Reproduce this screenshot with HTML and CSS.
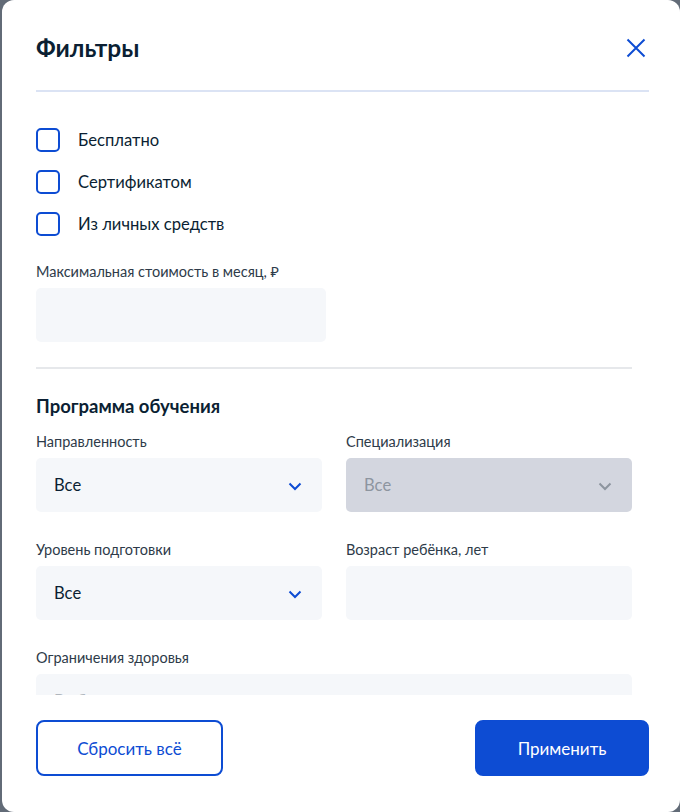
FILE: index.html
```html
<!DOCTYPE html>
<html lang="ru">
<head>
<meta charset="utf-8">
<title>Фильтры</title>
<link rel="stylesheet" href="styles.css">
</head>
<body>
<div class="modal">
  <header class="modal-header">
    <div class="header-row">
      <h1 class="title">Фильтры</h1>
      <button class="close" aria-label="Закрыть">
        <svg width="24" height="24" viewBox="0 0 24 24"><path d="M3.5 3.5L20.5 20.5M20.5 3.5L3.5 20.5" stroke="#0d4cd3" stroke-width="2" fill="none"/></svg>
      </button>
    </div>
    <div class="header-divider"></div>
  </header>

  <div class="modal-body">
    <div class="checks">
      <label class="check"><span class="box"></span><span>Бесплатно</span></label>
      <label class="check"><span class="box"></span><span>Сертификатом</span></label>
      <label class="check"><span class="box"></span><span>Из личных средств</span></label>
    </div>

    <div class="field field-price">
      <div class="label">Максимальная стоимость в месяц, ₽</div>
      <div class="input input-price"></div>
    </div>

    <div class="divider"></div>

    <h2 class="section-title">Программа обучения</h2>

    <div class="grid">
      <div class="field">
        <div class="label">Направленность</div>
        <div class="input select"><span>Все</span>
          <svg class="chev" width="14" height="9" viewBox="0 0 14 9"><path d="M1.5 1.5L7 7L12.5 1.5" stroke="#0d4cd3" stroke-width="2" fill="none"/></svg>
        </div>
      </div>
      <div class="field">
        <div class="label">Специализация</div>
        <div class="input select disabled"><span>Все</span>
          <svg class="chev" width="14" height="9" viewBox="0 0 14 9"><path d="M1.5 1.5L7 7L12.5 1.5" stroke="#8d959f" stroke-width="2" fill="none"/></svg>
        </div>
      </div>
      <div class="field">
        <div class="label">Уровень подготовки</div>
        <div class="input select"><span>Все</span>
          <svg class="chev" width="14" height="9" viewBox="0 0 14 9"><path d="M1.5 1.5L7 7L12.5 1.5" stroke="#0d4cd3" stroke-width="2" fill="none"/></svg>
        </div>
      </div>
      <div class="field">
        <div class="label">Возраст ребёнка, лет</div>
        <div class="input"></div>
      </div>
      <div class="field span2">
        <div class="label">Ограничения здоровья</div>
        <div class="input select"><span class="placeholder">Выберите ограничения</span></div>
      </div>
    </div>
  </div>

  <footer class="modal-footer">
    <button class="btn btn-outline">Сбросить всё</button>
    <button class="btn btn-primary">Применить</button>
  </footer>
</div>
</body>
</html>
```

FILE: styles.css
```css
* { box-sizing: border-box; }

html, body {
  margin: 0;
  height: 100%;
}

body {
  background: #626b77;
  font-family: Lato, "Noto Sans", "Liberation Sans", sans-serif;
  color: #0b1f33;
  overflow: hidden;
}

.modal {
  margin-left: 2px;
  width: 678px;
  height: 812px;
  background: #fff;
  border-radius: 12px;
  display: flex;
  flex-direction: column;
  overflow: hidden;
}

.modal-header {
  padding: 32px 31px 0 34px;
  flex: none;
}

.header-row {
  display: flex;
  align-items: center;
  justify-content: space-between;
  height: 32px;
}

.title {
  margin: 0;
  font-size: 24.5px;
  line-height: 32px;
  font-weight: 700;
  color: #0b1f33;
}

.close {
  border: 0;
  background: none;
  padding: 0;
  width: 24px;
  height: 24px;
  margin-right: 1px;
  cursor: pointer;
  display: block;
}

.close svg { display: block; }

.header-divider {
  margin-top: 26px;
  height: 2px;
  background: #dbe3f4;
}

.modal-body {
  flex: 1;
  overflow: hidden;
  padding: 36px 48px 0 34px;
}

.checks {
  display: flex;
  flex-direction: column;
  gap: 18px;
}

.check {
  display: flex;
  align-items: center;
  gap: 18px;
  font-size: 16.6px;
  line-height: 24px;
  color: #0b1f33;
}

.box {
  width: 24px;
  height: 24px;
  border: 2px solid #0d4cd3;
  border-radius: 5px;
  flex: none;
}

.field-price {
  margin-top: 26px;
}

.label {
  font-size: 14.5px;
  line-height: 20px;
  color: #2e3b49;
  margin-bottom: 6px;
}

.input {
  height: 54px;
  background: #f5f7fa;
  border-radius: 5px;
}

.input-price {
  width: 290px;
}

.divider {
  margin-top: 25px;
  height: 2px;
  background: #e6e8eb;
}

.section-title {
  margin: 25px 0 14px;
  font-size: 18.5px;
  line-height: 24px;
  font-weight: 700;
  color: #0b1f33;
}

.grid {
  display: grid;
  grid-template-columns: 286px 286px;
  column-gap: 24px;
  row-gap: 28px;
}

.span2 { grid-column: 1 / span 2; }

.select {
  display: flex;
  align-items: center;
  justify-content: space-between;
  padding: 0 20px 0 18px;
  font-size: 16.6px;
  color: #0b1f33;
}

.chev { display: block; margin-top: 2px; }

.select.disabled {
  background: #d3d6df;
  color: #8d959f;
}

.placeholder { color: #b0b6bd; }

.modal-footer {
  flex: none;
  display: flex;
  justify-content: space-between;
  align-items: center;
  padding: 25px 31px 36px 34px;
}

.btn {
  height: 56px;
  border-radius: 8px;
  font-family: Lato, "Noto Sans", "Liberation Sans", sans-serif;
  font-size: 17px;
  padding: 0 30px;
  cursor: pointer;
}

.btn-outline {
  background: #fff;
  border: 2px solid #0d4cd3;
  color: #0d4cd3;
  width: 187px;
}

.btn-primary {
  background: #0d4cd3;
  border: 2px solid #0d4cd3;
  color: #fff;
  width: 174px;
}
```
